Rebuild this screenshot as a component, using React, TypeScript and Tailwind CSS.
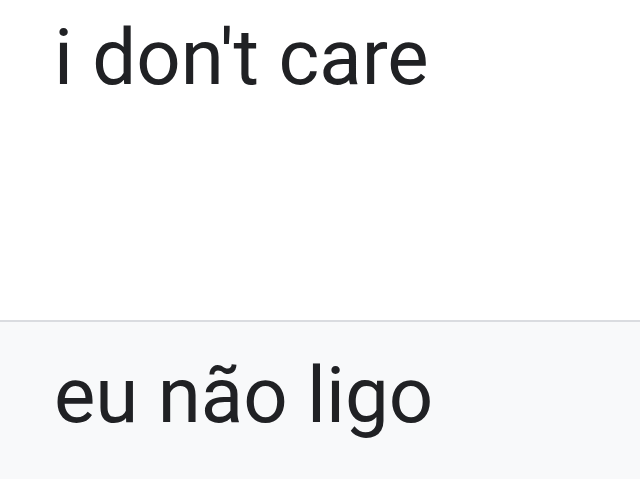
export default function App() {
  return (
    <div
      className="w-[640px] h-[479px] flex flex-col bg-white text-[#202124]"
      style={{ fontFamily: "Roboto, 'Noto Sans', sans-serif" }}
    >
      <div className="h-[322px] border-b-2 border-[#dadce0] pl-[54px] pt-[19px]">
        <p className="text-[78px] leading-[78px]">i don't care</p>
      </div>
      <div className="flex-1 bg-[#f8f9fa] pl-[54px] pt-[35px]">
        <p className="text-[78px] leading-[78px]">eu não ligo</p>
      </div>
    </div>
  );
}
